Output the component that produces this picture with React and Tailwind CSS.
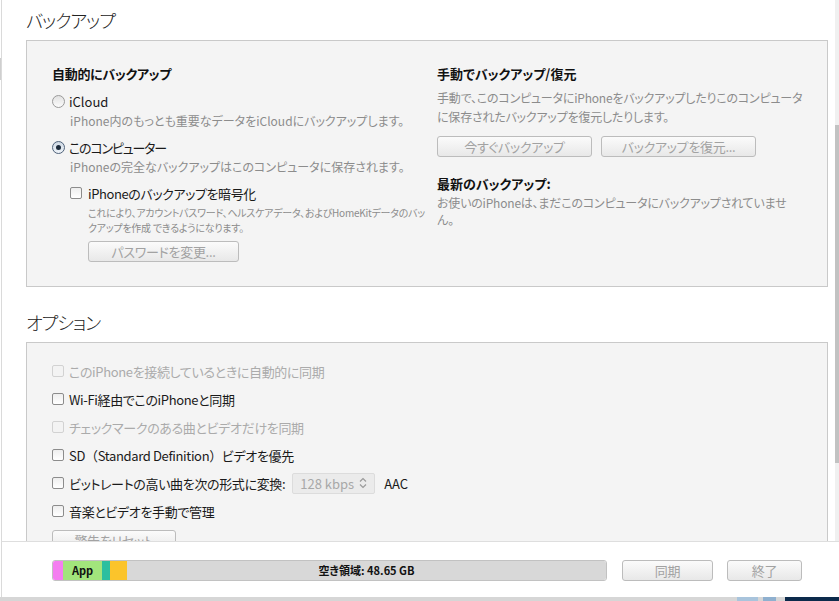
import React from "react";

function Radio({ checked }) {
  if (checked) {
    return (
      <span className="flex h-[13px] w-[13px] shrink-0 items-center justify-center rounded-full border border-[#4f627a] bg-gradient-to-b from-[#cfd9e4] to-[#eef3f8]">
        <span className="h-[5px] w-[5px] rounded-full bg-[#1c2a3a]" />
      </span>
    );
  }
  return (
    <span className="h-[13px] w-[13px] shrink-0 rounded-full border border-[#9a9a9a] bg-gradient-to-b from-[#e2e2e2] to-[#fbfbfb]" />
  );
}

function Check({ disabled }) {
  return disabled ? (
    <span className="h-[12px] w-[12px] shrink-0 rounded-[2px] border border-[#d2d2d2] bg-[#f3f3f3]" />
  ) : (
    <span className="h-[12px] w-[12px] shrink-0 rounded-[2px] border border-[#8c8c8c] bg-gradient-to-b from-[#eeeeee] to-[#ffffff]" />
  );
}

function Btn({ children, w }) {
  return (
    <div
      className={`flex h-[21px] items-center justify-center rounded-[3px] border border-[#bcbcbc] bg-gradient-to-b from-[#fbfbfb] to-[#e8e8e8] text-[13px] leading-none tracking-[-0.3px] text-[#a2a2a2] ${w}`}
    >
      {children}
    </div>
  );
}

function OptRow({ disabled, children, extra }) {
  return (
    <div className="flex h-[28px] items-center">
      <Check disabled={disabled} />
      <span
        className={`ml-[5px] whitespace-nowrap text-[13px] leading-none tracking-[-0.35px] ${
          disabled ? "text-[#ababab]" : "text-[#1a1a1a]"
        }`}
      >
        {children}
      </span>
      {extra}
    </div>
  );
}

export default function App() {
  return (
    <div className="relative flex h-[601px] w-[839px] flex-col overflow-hidden bg-white font-['Noto_Sans_CJK_JP',sans-serif] [font-feature-settings:'palt']">
      <div className="absolute left-0 top-[58px] h-[22px] w-[1px] bg-[#cfcfcf]" />
      {/* main scroll area */}
      <div className="ml-[1px] flex h-[541px] border-l border-[#dadada]">
        <div className="flex-1 overflow-hidden pl-[24px] pr-[7px]">
          {/* Backup title */}
          <div className="h-[40px] pt-[6px] text-[18px] font-light leading-[28px] tracking-[-1px] text-[#222]">
            バックアップ
          </div>
          {/* Backup box */}
          <div className="flex h-[247px] border border-[#c9c9c9] bg-[#f4f4f4] pl-[25px] pt-[23px]">
            {/* left column */}
            <div className="w-[385px] shrink-0">
              <div className="text-[13px] font-bold leading-[20px] tracking-[-0.3px] text-[#111]">自動的にバックアップ</div>
              <div className="mt-[7px] flex h-[20px] items-center">
                <Radio />
                <span className="ml-[4px] text-[13px] leading-none text-[#1a1a1a]">iCloud</span>
              </div>
              <div className="ml-[18px] whitespace-nowrap text-[12px] leading-[20px] text-[#8c8c8c]">
                iPhone内のもっとも重要なデータをiCloudにバックアップします。
              </div>
              <div className="mt-[6px] flex h-[20px] items-center">
                <Radio checked />
                <span className="ml-[4px] text-[13px] leading-none tracking-[-1.2px] text-[#1a1a1a]">このコンピューター</span>
              </div>
              <div className="ml-[18px] whitespace-nowrap text-[12px] leading-[20px] text-[#8c8c8c]">
                iPhoneの完全なバックアップはこのコンピュータに保存されます。
              </div>
              <div className="ml-[18px] mt-[6px] flex h-[20px] items-center">
                <Check />
                <span className="ml-[6px] text-[13px] leading-none tracking-[-0.4px] text-[#1a1a1a]">iPhoneのバックアップを暗号化</span>
              </div>
              <div className="ml-[36px] mt-[2px] whitespace-nowrap text-[10px] leading-[15px] tracking-[-0.25px] text-[#8c8c8c]">
                これにより、アカウントパスワード、ヘルスケアデータ、およびHomeKitデータのバッ
                <br />
                クアップを作成 できるようになります。
              </div>
              <div className="ml-[36px] mt-[6px]">
                <Btn w="w-[151px]">パスワードを変更...</Btn>
              </div>
            </div>
            {/* right column */}
            <div className="flex-1">
              <div className="text-[13px] font-bold leading-[20px] text-[#111]">手動でバックアップ/復元</div>
              <div className="mt-[4px] whitespace-nowrap text-[12px] leading-[19px] tracking-[-0.2px] text-[#8c8c8c]">
                手動で、このコンピュータにiPhoneをバックアップしたりこのコンピュータ
                <br />
                に保存されたバックアップを復元したりします。
              </div>
              <div className="mt-[10px] flex gap-[9px]">
                <Btn w="w-[155px]">今すぐバックアップ</Btn>
                <Btn w="w-[155px]">バックアップを復元...</Btn>
              </div>
              <div className="mt-[17px] text-[13px] font-bold leading-[20px] text-[#111]">最新のバックアップ:</div>
              <div className="whitespace-nowrap text-[12px] leading-[17px] tracking-[-0.2px] text-[#8c8c8c]">
                お使いのiPhoneは、まだこのコンピュータにバックアップされていませ
                <br />
                ん。
              </div>
            </div>
          </div>
          {/* Options title */}
          <div className="h-[55px] pt-[21px] text-[18px] font-light leading-[28px] tracking-[-1px] text-[#222]">オプション</div>
          {/* Options box */}
          <div className="h-[260px] border border-[#c9c9c9] bg-[#f4f4f4] pl-[25px] pt-[14px]">
            <OptRow disabled>このiPhoneを接続しているときに自動的に同期</OptRow>
            <OptRow>Wi-Fi経由でこのiPhoneと同期</OptRow>
            <OptRow disabled>チェックマークのある曲とビデオだけを同期</OptRow>
            <OptRow>
              SD<span className="[font-feature-settings:normal]">（</span>Standard Definition
              <span className="[font-feature-settings:normal]">）</span>ビデオを優先
            </OptRow>
            <OptRow
              extra={
                <>
                  <div className="ml-[7px] flex h-[21px] w-[83px] items-center justify-between rounded-[2px] border border-[#dcdcdc] bg-[#ebebeb] pl-[7px] pr-[7px]">
                    <span className="text-[13px] leading-none text-[#a8a8a8]">128 kbps</span>
                    <svg width="8" height="12" viewBox="0 0 8 12" fill="none" stroke="#9a9a9a" strokeWidth="1.2">
                      <path d="M1 4.5 L4 1.5 L7 4.5" />
                      <path d="M1 7.5 L4 10.5 L7 7.5" />
                    </svg>
                  </div>
                  <span className="ml-[9px] text-[13px] leading-none text-[#1a1a1a]">AAC</span>
                </>
              }
            >
              ビットレートの高い曲を次の形式に変換:
            </OptRow>
            <OptRow>音楽とビデオを手動で管理</OptRow>
            <div className="mt-[5px]">
              <Btn w="w-[124px]">警告をリセット</Btn>
            </div>
          </div>
        </div>
        {/* scrollbar */}
        <div className="w-[4px] shrink-0 bg-[#f0f0f0]">
          <div className="mt-[125px] h-[338px] bg-[#c2c2c2]" />
        </div>
      </div>
      {/* bottom bar */}
      <div className="ml-[1px] flex h-[56px] items-start border-l border-t border-[#dedede] border-l-[#dadada] pl-[50px] pt-[18px]">
        <div className="flex h-[21px] w-[555px] overflow-hidden rounded-[3px] border border-[#c2c2c2] text-[11px] font-bold leading-none text-[#111]">
          <div className="w-[10px] bg-[#f47ef0]" />
          <div className="flex w-[39px] items-center justify-center bg-[#a2e57c]">App</div>
          <div className="w-[8px] bg-[#2cbf9f]" />
          <div className="w-[17px] bg-[#fbc42b]" />
          <div className="flex flex-1 items-center justify-center bg-[#d8d8d8]">空き領域: 48.65 GB</div>
        </div>
        <div className="ml-[15px]">
          <Btn w="w-[91px]">同期</Btn>
        </div>
        <div className="ml-[14px]">
          <Btn w="w-[75px]">終了</Btn>
        </div>
      </div>
      {/* bottom strip */}
      <div className="flex h-[4px] bg-[#d6d6d6]">
        <div className="w-[737px]" />
        <div className="w-[21px] bg-[#a9c4dc]" />
        <div className="w-[5px]" />
        <div className="w-[13px] bg-[#8fb0cf]" />
        <div className="w-[9px]" />
        <div className="flex-1 bg-[#0c2a4b]" />
      </div>
    </div>
  );
}
